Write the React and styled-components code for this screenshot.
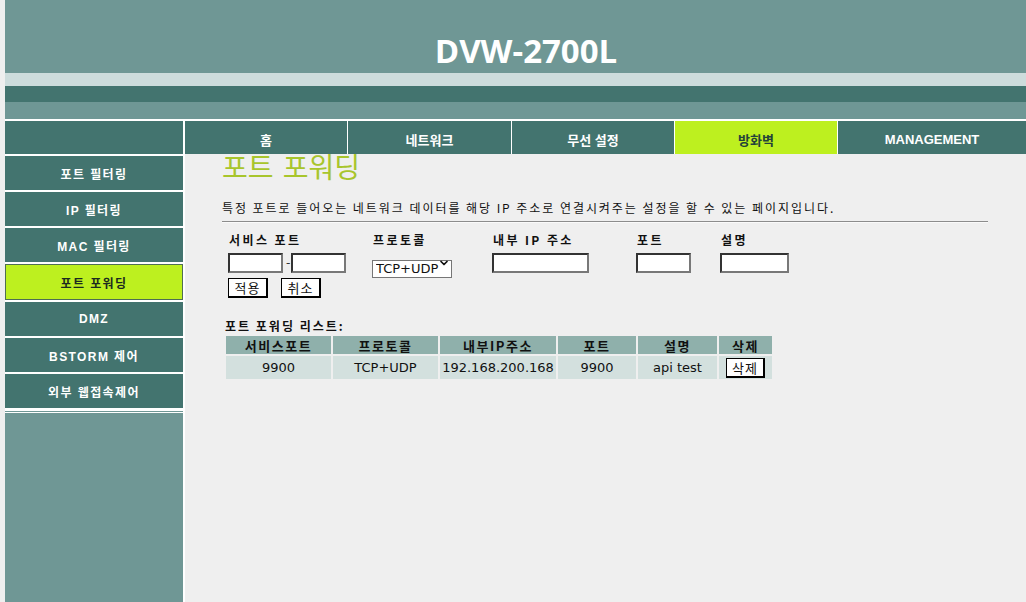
import React from 'react';
import styled, { createGlobalStyle } from 'styled-components';
import { ChevronDown } from 'lucide-react';

const TEAL = '#43746f';
const GREY_TEAL = '#6f9795';
const LIME = '#bdf01f';

const GlobalStyle = createGlobalStyle`
  html, body { margin: 0; padding: 0; background: #efefef; }
  body { font-family: "Noto Sans CJK KR", sans-serif; overflow: hidden; }
  * { box-sizing: border-box; }
`;

const Page = styled.div`
  min-height: 100vh;
  margin-left: 5px;
  display: flex;
  flex-direction: column;
`;

const Banner = styled.header`
  height: 73px;
  background: ${GREY_TEAL};
  display: flex;
  align-items: center;
  justify-content: center;
  padding: 28px 0 0 21px;
`;

const Logo = styled.h1`
  margin: 0;
  font-family: "Open Sans", sans-serif;
  font-weight: 700;
  font-size: 33px;
  line-height: 1;
  color: #fff;
`;

const Stripe = styled.div`
  height: ${p => p.$h}px;
  background: ${p => p.$color};
`;

const Frame = styled.div`
  flex: 1;
  display: grid;
  grid-template-columns: 178px 1fr;
  grid-template-rows: 33px 1fr;
  column-gap: 2px;
  background: #fff;
`;

const Corner = styled.div`
  background: ${TEAL};
`;

const NavBar = styled.nav`
  display: grid;
  grid-template-columns: 162px 163px 162px 162px 1fr;
  column-gap: 1px;
  background: #fff;
`;

const NavTab = styled.div`
  background: ${p => (p.$active ? LIME : TEAL)};
  color: ${p => (p.$active ? '#24423a' : '#fff')};
  display: flex;
  align-items: center;
  justify-content: center;
  padding-top: 3px;
  font-family: "Liberation Sans", "Noto Sans CJK KR", sans-serif;
  font-weight: 700;
  font-size: 13px;
`;

const Sidebar = styled.aside`
  display: flex;
  flex-direction: column;
  gap: 2px;
  padding-top: 2px;
  background: #fff;
`;

const SideItem = styled.div`
  height: ${p => (p.$active ? 36 : 34)}px;
  background: ${p => (p.$active ? LIME : TEAL)};
  border: ${p => (p.$active ? '1px solid #4f6e52' : 'none')};
  color: ${p => (p.$active ? '#1c2a20' : '#fff')};
  display: flex;
  align-items: center;
  justify-content: center;
  font-family: "Liberation Sans", "Noto Sans CJK KR", sans-serif;
  font-weight: 700;
  font-size: 12px;
  letter-spacing: 1.4px;
`;

const SideFiller = styled.div`
  flex: 1;
  background: ${GREY_TEAL};
  border-top: 3px double #fff;
`;

const Content = styled.main`
  background: #efefef;
  padding: 0 38px 0 37px;
`;

const Title = styled.h2`
  margin: 0;
  font-size: 28px;
  line-height: 24px;
  font-weight: 400;
  letter-spacing: 0;
  word-spacing: 3px;
  color: #a8c52c;
`;

const Desc = styled.p`
  margin: 22px 0 0;
  font-size: 12px;
  line-height: 16px;
  letter-spacing: 1.95px;
  word-spacing: 0;
  color: #111;
`;

const Rule = styled.div`
  margin-top: 5px;
  border-top: 1px solid #8c8c8c;
  border-bottom: 1px solid #fafafa;
`;

const Form = styled.div`
  margin-top: 10px;
  padding-left: 6px;
  display: grid;
  grid-template-columns: 144px 120px 144px 84px auto;
  justify-content: start;
`;

const Field = styled.div`
  display: flex;
  flex-direction: column;
  align-items: flex-start;
  gap: 6px;
`;

const Label = styled.div`
  font-size: 12px;
  line-height: 14px;
  font-weight: 700;
  letter-spacing: 2.4px;
  word-spacing: 0;
  padding-left: 1px;
  color: #111;
`;

const PortPair = styled.div`
  display: flex;
  align-items: center;
`;

const Dash = styled.span`
  font-family: "DejaVu Sans", sans-serif;
  font-size: 12px;
  margin: 0 1px 0 3px;
  color: #333;
`;

const TextInput = styled.input`
  width: ${p => p.$w}px;
  height: 20px;
  border: 2px solid;
  border-color: #333 #787878 #787878 #333;
  background: #fff;
  padding: 0 2px;
  margin: 0;
  font-family: "DejaVu Sans", sans-serif;
  font-size: 13px;
  outline: none;
`;

const SelectWrap = styled.div`
  position: relative;
  width: 80px;
  height: 18px;
  margin-top: 1px;
`;

const Select = styled.select`
  appearance: none;
  width: 100%;
  height: 100%;
  border: 1px solid #767676;
  border-radius: 0;
  background: #fff;
  padding: 0 0 0 3px;
  margin: 0;
  font-family: "DejaVu Sans", sans-serif;
  font-size: 13px;
  color: #111;
  outline: none;
`;

const Chevron = styled(ChevronDown)`
  position: absolute;
  right: 2px;
  top: 3px;
  pointer-events: none;
`;

const ButtonRow = styled.div`
  display: flex;
  gap: 13px;
  margin-top: 5px;
  padding-left: 6px;
`;

const Button = styled.button`
  width: ${p => p.$w || 40}px;
  height: 20px;
  padding: 0;
  margin: 0;
  background: #fff;
  border: 1px solid #000;
  border-right-width: 2px;
  border-bottom-width: 2px;
  border-radius: 0;
  font-family: "Noto Sans CJK KR", sans-serif;
  font-size: 13px;
  line-height: 1;
  letter-spacing: 1px;
  color: #111;
`;

const ListTitle = styled.div`
  margin-top: 21px;
  padding-left: 3px;
  font-size: 12px;
  line-height: 14px;
  font-weight: 700;
  letter-spacing: 2px;
  word-spacing: 0;
  color: #111;
`;

const Table = styled.table`
  margin: 1px 0 0 2px;
  border-spacing: 2px;
  table-layout: fixed;
  width: 550px;
`;

const Th = styled.th`
  height: 18px;
  padding: 0;
  background: #8fb0ab;
  font-size: 13px;
  font-weight: 700;
  letter-spacing: 1.5px;
  line-height: 1;
  color: #111;
`;

const Td = styled.td`
  height: 23px;
  padding: 0;
  background: #d3e0de;
  text-align: center;
  font-family: "DejaVu Sans", sans-serif;
  font-size: 13px;
  color: #111;
`;

const tabs = ['홈', '네트워크', '무선 설정', '방화벽', 'MANAGEMENT'];
const sideItems = ['포트 필터링', 'IP 필터링', 'MAC 필터링', '포트 포워딩', 'DMZ', 'BSTORM 제어', '외부 웹접속제어'];
const colWidths = [105, 105, 116, 78, 79, 53];
const headers = ['서비스포트', '프로토콜', '내부IP주소', '포트', '설명', '삭제'];
const rows = [{ port: '9900', proto: 'TCP+UDP', ip: '192.168.200.168', lport: '9900', desc: 'api test' }];

export default function App() {
  return (
    <>
      <GlobalStyle />
      <Page>
        <Banner>
          <Logo>DVW-2700L</Logo>
        </Banner>
        <Stripe $h={13} $color="#cddcdc" />
        <Stripe $h={16} $color={TEAL} />
        <Stripe $h={17} $color={GREY_TEAL} />
        <Stripe $h={2} $color="#fff" />
        <Frame>
          <Corner />
          <NavBar>
            {tabs.map(t => (
              <NavTab key={t} $active={t === '방화벽'}>{t}</NavTab>
            ))}
          </NavBar>
          <Sidebar>
            {sideItems.map(s => (
              <SideItem key={s} $active={s === '포트 포워딩'}>{s}</SideItem>
            ))}
            <SideFiller />
          </Sidebar>
          <Content>
            <Title>포트 포워딩</Title>
            <Desc>특정 포트로 들어오는 네트워크 데이터를 해당 IP 주소로 연결시켜주는 설정을 할 수 있는 페이지입니다.</Desc>
            <Rule />
            <Form>
              <Field>
                <Label>서비스 포트</Label>
                <PortPair>
                  <TextInput $w={55} />
                  <Dash>-</Dash>
                  <TextInput $w={55} />
                </PortPair>
              </Field>
              <Field>
                <Label>프로토콜</Label>
                <SelectWrap>
                  <Select defaultValue="TCP+UDP">
                    <option>TCP+UDP</option>
                    <option>TCP</option>
                    <option>UDP</option>
                  </Select>
                  <Chevron size={12} strokeWidth={3.5} color="#111" />
                </SelectWrap>
              </Field>
              <Field>
                <Label>내부 IP 주소</Label>
                <TextInput $w={97} />
              </Field>
              <Field>
                <Label>포트</Label>
                <TextInput $w={55} />
              </Field>
              <Field>
                <Label>설명</Label>
                <TextInput $w={69} />
              </Field>
            </Form>
            <ButtonRow>
              <Button>적용</Button>
              <Button>취소</Button>
            </ButtonRow>
            <ListTitle>포트 포워딩 리스트:</ListTitle>
            <Table>
              <colgroup>
                {colWidths.map((w, i) => <col key={i} style={{ width: w }} />)}
              </colgroup>
              <thead>
                <tr>
                  {headers.map(h => <Th key={h}>{h}</Th>)}
                </tr>
              </thead>
              <tbody>
                {rows.map((r, i) => (
                  <tr key={i}>
                    <Td>{r.port}</Td>
                    <Td>{r.proto}</Td>
                    <Td>{r.ip}</Td>
                    <Td>{r.lport}</Td>
                    <Td>{r.desc}</Td>
                    <Td><Button $w={39}>삭제</Button></Td>
                  </tr>
                ))}
              </tbody>
            </Table>
          </Content>
        </Frame>
      </Page>
    </>
  );
}
